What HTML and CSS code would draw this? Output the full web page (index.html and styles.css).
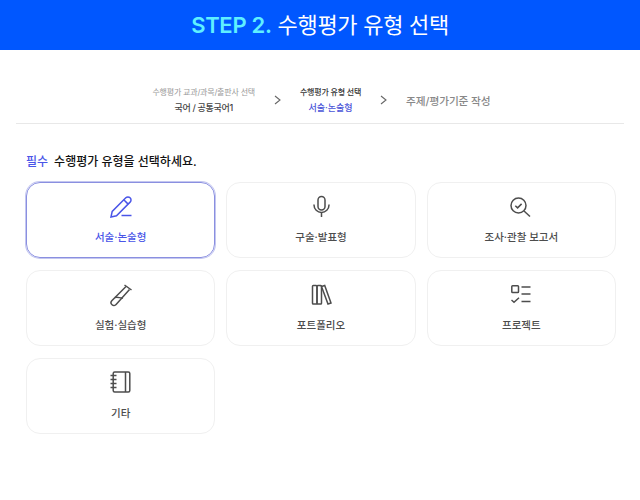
FILE: index.html
```html
<!DOCTYPE html>
<html lang="ko">
<head>
  <meta charset="UTF-8">
  <meta name="viewport" content="width=device-width, initial-scale=1.0">
  <title>STEP 2. 수행평가 유형 선택</title>
  <link rel="stylesheet" href="styles.css">
</head>
<body>
  <header class="top">
    <h1><span class="step">STEP 2.</span> 수행평가 유형 선택</h1>
  </header>

  <nav class="steps">
    <div class="step_item done">
      <p class="cap">수행평가 교과/과목/출판사 선택</p>
      <p class="val">국어 / 공통국어1</p>
    </div>
    <svg class="arrow" viewBox="0 0 7 10"><path d="M1 1l5 4-5 4"/></svg>
    <div class="step_item now">
      <p class="cap">수행평가 유형 선택</p>
      <p class="val">서술·논술형</p>
    </div>
    <svg class="arrow" viewBox="0 0 7 10"><path d="M1 1l5 4-5 4"/></svg>
    <p class="step_last">주제/평가기준 작성</p>
  </nav>

  <main class="content">
    <h2 class="guide"><span class="must">필수</span>수행평가 유형을 선택하세요.</h2>
    <div class="types">
      <div class="card on">
        <svg class="ico" viewBox="0 0 24 24"><path d="M2 22l1.200-5.600L16.800 2.800a3 3 0 0 1 4.300 0 3 3 0 0 1 0 4.300L7.500 20.700z"/><path d="M14.800 4.800l4.300 4.300"/><path d="M12.500 20.500h10"/></svg>
        <p>서술·논술형</p>
      </div>
      <div class="card">
        <svg class="ico" viewBox="0 0 24 24"><rect x="9" y="1.500" width="7" height="13.500" rx="3.500"/><path d="M5 9.500v.5a7.500 7.500 0 0 0 15 0v-.5"/><path d="M12.500 17.500V22"/></svg>
        <p>구술·발표형</p>
      </div>
      <div class="card">
        <svg class="ico" viewBox="0 0 24 24"><circle cx="9.500" cy="10.500" r="7.500"/><path d="M15 16l6 5.500"/><path d="M6.300 10.700l2.300 2.200 4-4"/></svg>
        <p>조사·관찰 보고서</p>
      </div>
      <div class="card">
        <svg class="ico" viewBox="0 0 24 24"><path d="M15.500 2l7 5"/><path d="M17 3.500L2.800 17.700a2.800 2.800 0 0 0 4.300 3.800L20.500 6.500"/><path d="M6 14.500c3-1 5 1 8 .5"/></svg>
        <p>실험·실습형</p>
      </div>
      <div class="card">
        <svg class="ico" viewBox="0 0 24 24"><rect x="3.500" y="2.500" width="4.500" height="18.500" rx=".8"/><rect x="8" y="2.500" width="4.500" height="18.500" rx=".8"/><path d="M12.500 3.500l3.200-1 6.300 17.500-3 1z"/></svg>
        <p>포트폴리오</p>
      </div>
      <div class="card">
        <svg class="ico" viewBox="0 0 24 24"><rect x="2.800" y="2.800" width="6.700" height="6.700" rx=".8"/><path d="M12.500 4h9M12.500 11h9M12.500 18.500h9M2.500 17l2.500 2.200 5-4.500"/></svg>
        <p>프로젝트</p>
      </div>
      <div class="card">
        <svg class="ico" viewBox="0 0 24 24"><rect x="4.200" y="1" width="16.600" height="20" rx="1.500"/><path d="M16.500 1v20M1.500 4.500h6M1.500 8.500h6M1.500 12.500h6M1.500 16.500h6"/></svg>
        <p>기타</p>
      </div>
    </div>
  </main>
</body>
</html>
```
FILE: styles.css
```css
body, h1, h2, p{  margin: 0;  padding: 0;  }
body{
  width: 640px;  height: 500px;  overflow: hidden;  background: #fff;
  font-family: Inter, "Noto Sans CJK KR", "Noto Sans", sans-serif;  color: #444;
}

.top{
  height: 50px;  background: #0057ff;
  display: flex;  justify-content: center;  align-items: center;
}
.top > h1{  font-size: 22px;  line-height: 50px;  font-weight: 400;  color: #fff;  letter-spacing: -0.3px;  }
.top .step{  font-weight: 600;  color: #5ff0ff;  }

.steps{
  height: 46px;  margin: 0 16px;  padding: 27px 0 0 3px;  border-bottom: 1px solid #e8e8e8;
  display: flex;  justify-content: center;  align-items: center;  column-gap: 19px;
}
.step_item{  text-align: center;  }
.step_item .cap{  font-size: 8px;  line-height: 12px;  letter-spacing: -0.2px;  }
.step_item .val{  font-size: 9px;  line-height: 14px;  margin-top: 3px;  font-weight: 500;  }
.done .cap{  color: #999;  }
.done .val{  color: #444;  letter-spacing: -0.3px;  }
.now .cap{  color: #333;  font-weight: 500;  }
.now .val{  color: #4a55d8;  }
.step_last{  font-size: 10.7px;  font-weight: 500;  color: #888;  letter-spacing: -0.1px;  }
.arrow{  width: 7px;  height: 10px;  fill: none;  stroke: #666;  stroke-width: 1.1;  }

.content{  padding: 29px 24px 0 26px;  }
.guide{  font-size: 12px;  line-height: 18px;  font-weight: 500;  color: #111;  }
.must{  color: #4a55e8;  margin-right: 6px;  }

.types{
  margin-top: 11px;
  display: grid;  grid-template-columns: repeat(3, 1fr);  column-gap: 11px;  row-gap: 12px;
  grid-auto-rows: 76px;
}
.card{
  border: 1px solid #f0f0f0;  border-radius: 14px;  box-sizing: border-box;
  display: flex;  flex-direction: column;  align-items: center;  padding-top: 12px;
}
.card > p{  font-size: 10.5px;  line-height: 16px;  margin-top: 11px;  font-weight: 500;  color: #4d4d4d;  }
.ico{  width: 24px;  height: 24px;  fill: none;  stroke: #4d4d4d;  stroke-width: 1.5;  }
.card.on{  border-color: #8a8fe0;  box-shadow: 0 0 0 1px #c4c7f0;  }
.card.on > p{  color: #4a55e8;  }
.card.on .ico{  stroke: #4a55e8;  }
```
